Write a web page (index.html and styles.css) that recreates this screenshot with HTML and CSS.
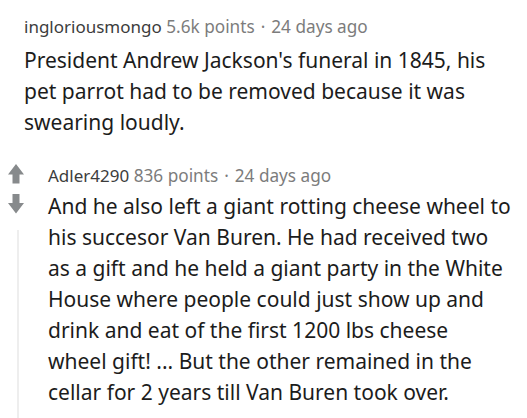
FILE: index.html
```html
<!DOCTYPE html>
<html>
<head>
<meta charset="utf-8">
<link rel="stylesheet" href="styles.css">
</head>
<body>
<div class="page">
  <div class="comment top">
    <div class="meta"><span class="user">ingloriousmongo</span> <span class="score">5.6k points</span><span class="dot">·</span><span class="time">24 days ago</span></div>
    <p class="body">President Andrew Jackson's funeral in 1845, his pet parrot had to be removed because it was swearing loudly.</p>
  </div>
  <div class="comment reply">
    <div class="votes">
      <svg class="arrow" width="16" height="20" viewBox="0 0 16 20"><path d="M8 0 L16 10.5 L11.5 10.5 L11.5 19.5 L4.5 19.5 L4.5 10.5 L0 10.5 Z" fill="#878a8c"/></svg>
      <svg class="arrow" width="16" height="20" viewBox="0 0 16 20"><path d="M8 19.5 L16 9 L11.5 9 L11.5 0 L4.5 0 L4.5 9 L0 9 Z" fill="#878a8c"/></svg>
      <div class="thread"></div>
    </div>
    <div class="content">
      <div class="meta"><span class="user">Adler4290</span> <span class="score">836 points</span><span class="dot">·</span><span class="time">24 days ago</span></div>
      <p class="body">And he also left a giant rotting cheese wheel to his succesor Van Buren. He had received two as a gift and he held a giant party in the White House where people could just show up and drink and eat of the first 1200 lbs cheese wheel gift! ... But the other remained in the cellar for 2 years till Van Buren took over.</p>
    </div>
  </div>
</div>
</body>
</html>
```
FILE: styles.css
```css
html, body {
  margin: 0;
  padding: 0;
  background: #ffffff;
}
.page {
  font-family: "Noto Sans", "Open Sans", sans-serif;
  color: #1c1c1c;
  width: 527px;
  height: 418px;
  overflow: hidden;
}
.comment.top {
  padding: 15px 16px 0 24px;
}
.meta {
  font-size: 17.2px;
  line-height: 24px;
  color: #7c7c7c;
}
.meta .user {
  color: #3c3c3c;
  font-size: 17px;
}
.meta .dot {
  margin: 0 6px;
}
.body {
  margin: 6px 0 0;
  font-size: 21px;
  line-height: 31px;
  color: #1c1c1c;
}
.comment.reply {
  display: flex;
  margin-top: 26px;
  padding: 0 16px 0 8px;
}
.reply .body {
  margin-top: 3px;
}
.votes {
  width: 40px;
  flex-shrink: 0;
  display: flex;
  flex-direction: column;
  align-items: flex-start;
  gap: 10px;
}
.thread {
  width: 2px;
  margin-left: 9px;
  margin-top: 6px;
  height: 220px;
  background: #eeeeee;
}
.content {
  flex: 1;
  min-width: 0;
}
```
